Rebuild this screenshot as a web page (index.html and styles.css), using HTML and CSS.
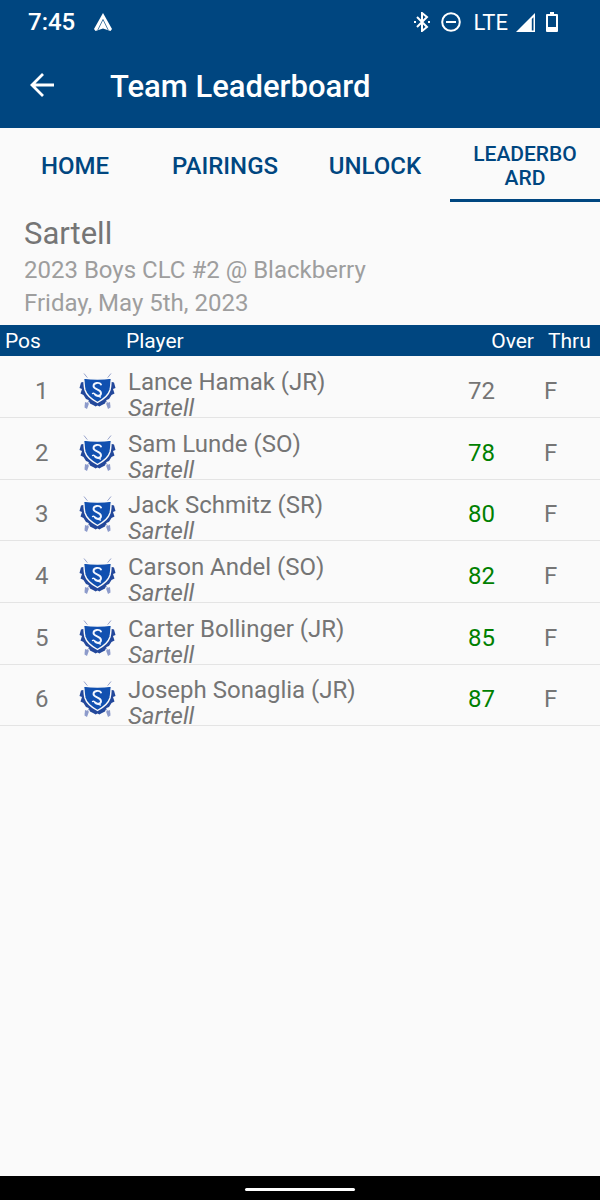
FILE: index.html
```html
<!DOCTYPE html>
<html lang="en">
<head>
<meta charset="utf-8">
<meta name="viewport" content="width=device-width, initial-scale=1">
<title>Team Leaderboard</title>
<link rel="stylesheet" href="styles.css">
</head>
<body>
<svg class="sprite" aria-hidden="true">
  <symbol id="crest" viewBox="0 0 38 38">
    <path fill="none" stroke="#98a3cc" stroke-width="1" d="M5 1.500 31 34M32 1.500 6 34"/>
    <path fill="#8d9bcb" d="m6 30 4 1.500-2 5.500-2.500-1.500zM31 30l-4 1.500 2 5.500 2.500-1.500z"/>
    <path fill="#23489b" d="M4 10 2 10.500.5 16l2.500 1-1.500 4.500 3 1.500 2.500 4 2.500 1 1.500 3.500 4 2 1.500 1 2-1 2 1 1.500-1 4-2 1.500-3.500 2.500-1 2.500-4 3-1.500-1.500-4.500 2.500-1L35 10.500 33 10z"/>
    <path fill="#1150b0" stroke="#fafafa" stroke-width="1.400" d="M4.500 6Q18.500 8 32.500 6l-.5 4c-.2 3-.2 5-1 8-1.500 5-6 9-12.500 12.500C12 27 7.500 23 6 18c-.8-3-.8-5-1-8z"/>
    <path fill="none" stroke="#f4f7ff" stroke-width="1.900" stroke-linecap="round" d="M22 12.500c-1.500-2.500-7.500-2-7.500 1.500 0 3.800 7.500 3 7.500 7.200 0 2.800-4 3.300-6 1.300"/>
    <path fill="none" stroke="#f4f7ff" stroke-width="1.300" stroke-linecap="round" d="M13.500 21.500c2-1.500 3 3 8 3.500"/>
  </symbol>
</svg>
<div class="screen">
  <header class="top">
    <div class="status">
      <span class="clock">7:45</span>
      <svg class="auto" viewBox="0 0 18 18" aria-hidden="true"><path fill="#fff" d="M9 0 0 16l1.500 2L9 15.500l7.500 2.500 1.500-2z"/><path fill="none" stroke="#004680" stroke-width=".7" d="M3.800 17 9 6.500l5.200 10.500"/></svg>
      <div class="indicators">
        <svg class="bluetooth" viewBox="0 0 18 20" fill="none" stroke="#fff" stroke-width="2" aria-hidden="true"><path d="m4 5 10 10-5 4V1l5 4L4 15"/><path d="M1 10h2M15 10h2"/></svg>
        <svg class="dnd" viewBox="0 0 20 20" fill="none" stroke="#fff" stroke-width="2" aria-hidden="true"><circle cx="10" cy="10" r="8.800"/><path d="M5 10h10"/></svg>
        <span class="network">LTE</span>
        <svg class="signal" viewBox="0 0 19 19" aria-hidden="true"><path fill="#fff" d="M0 19 19 0v19z"/><path fill="#004680" d="M15.800 6 17.500 4.300v13.200h-1.700z"/></svg>
        <svg class="battery" viewBox="0 0 12 20" aria-hidden="true"><path fill="#fff" fill-rule="evenodd" d="M4 0h4v2h3q1 0 1 1v16q0 1-1 1H1q-1 0-1-1V3q0-1 1-1h3zM2 4v11h8V4z"/></svg>
      </div>
    </div>
    <div class="appbar">
      <button class="back" type="button" aria-label="Back"><svg viewBox="0 0 24 24" fill="none" stroke="#fff" stroke-width="2.800" aria-hidden="true"><path d="M24 12H2M13 1 2 12l11 11"/></svg></button>
      <h1 class="title">Team Leaderboard</h1>
    </div>
  </header>
  <nav class="tabs">
    <a class="tab" href="#home">HOME</a>
    <a class="tab" href="#pairings">PAIRINGS</a>
    <a class="tab" href="#unlock">UNLOCK</a>
    <a class="tab tab-active" href="#leaderboard" aria-current="page">LEADERBOARD</a>
  </nav>
  <main class="content">
    <section class="event">
      <h2 class="team">Sartell</h2>
      <p class="detail">2023 Boys CLC #2 @ Blackberry</p>
      <p class="detail">Friday, May 5th, 2023</p>
    </section>
    <table class="board">
      <thead>
        <tr><th class="pos">Pos</th><th class="player">Player</th><th class="over">Over</th><th class="thru">Thru</th></tr>
      </thead>
      <tbody>
        <tr><td class="pos">1</td><td class="player"><div class="golfer"><svg class="crest"><use href="#crest"/></svg><div class="names"><span>Lance Hamak (JR)</span><em>Sartell</em></div></div></td><td class="over">72</td><td class="thru">F</td></tr>
        <tr><td class="pos">2</td><td class="player"><div class="golfer"><svg class="crest"><use href="#crest"/></svg><div class="names"><span>Sam Lunde (SO)</span><em>Sartell</em></div></div></td><td class="over above">78</td><td class="thru">F</td></tr>
        <tr><td class="pos">3</td><td class="player"><div class="golfer"><svg class="crest"><use href="#crest"/></svg><div class="names"><span>Jack Schmitz (SR)</span><em>Sartell</em></div></div></td><td class="over above">80</td><td class="thru">F</td></tr>
        <tr><td class="pos">4</td><td class="player"><div class="golfer"><svg class="crest"><use href="#crest"/></svg><div class="names"><span>Carson Andel (SO)</span><em>Sartell</em></div></div></td><td class="over above">82</td><td class="thru">F</td></tr>
        <tr><td class="pos">5</td><td class="player"><div class="golfer"><svg class="crest"><use href="#crest"/></svg><div class="names"><span>Carter Bollinger (JR)</span><em>Sartell</em></div></div></td><td class="over above">85</td><td class="thru">F</td></tr>
        <tr><td class="pos">6</td><td class="player"><div class="golfer"><svg class="crest"><use href="#crest"/></svg><div class="names"><span>Joseph Sonaglia (JR)</span><em>Sartell</em></div></div></td><td class="over above">87</td><td class="thru">F</td></tr>
      </tbody>
    </table>
  </main>
  <footer class="navbar"><div class="handle"></div></footer>
</div>
</body>
</html>
```
FILE: styles.css
```css
* { box-sizing: border-box; }
body { margin: 0; background: #fafafa; color: #757575; font-family: Roboto, sans-serif; font-size: 24px; }
.sprite { position: absolute; width: 0; height: 0; }
.screen { display: flex; flex-direction: column; min-height: 100vh; }

.top { background: #004680; color: #fff; }
.status { display: flex; align-items: center; height: 44px; padding: 0 42px 0 28px; }
.clock { font-size: 24px; font-weight: 500; }
.auto { width: 18px; height: 18px; margin-left: 19px; }
.indicators { display: flex; align-items: center; margin-left: auto; }
.bluetooth { width: 18px; height: 20px; }
.dnd { width: 20px; height: 20px; margin-left: 10px; }
.network { margin-left: 12px; font-size: 22px; }
.signal { width: 19px; height: 19px; margin-left: 8px; }
.battery { width: 12px; height: 20px; margin-left: 11px; }
.appbar { display: flex; align-items: center; height: 84px; padding: 2px 28px 0; }
.back { display: flex; width: 28px; height: 28px; padding: 0 2px; border: 0; background: none; }
.back svg { width: 24px; height: 24px; }
.title { margin: 0 0 0 54px; font-size: 31px; font-weight: 500; line-height: 36px; }

.tabs { display: grid; grid-template-columns: repeat(4, 1fr); height: 74px; }
.tab { display: flex; align-items: center; justify-content: center; padding: 2px 20px 0; color: #004680; font-weight: 500; text-align: center; text-decoration: none; }
.tab-active { padding-top: 4px; border-bottom: 3px solid #004680; font-size: 21px; line-height: 24px; word-break: break-all; }

.content { flex: 1; }
.event { padding: 11px 24px 5px; }
.team { margin: 0; font-size: 31px; font-weight: 400; line-height: 41px; }
.detail { margin: 0; color: #9e9e9e; font-size: 24px; line-height: 33px; }

.board { width: 100%; border-collapse: separate; border-spacing: 0; table-layout: fixed; }
.board th { height: 31px; padding: 0; background: #004680; color: #fff; font-size: 21px; font-weight: 400; line-height: 30px; text-align: left; }
.board td { height: 62px; padding: 8px 0 0; border-bottom: 1px solid #e4e4e4; line-height: 28px; }
.board tr:nth-child(3n) td { height: 61px; }
.board .pos { width: 79px; }
.board th.pos { padding-left: 5px; }
.board td.pos { padding-left: 35px; }
.board th.player { padding-left: 47px; }
.board .over { width: 85px; text-align: right; }
.board th.over { padding-right: 4px; }
.board td.over { padding-right: 43px; }
.board .above { color: #008000; }
.board .thru { width: 62px; }
.board th.thru { padding-left: 10px; }
.board td.thru { padding-left: 6px; }
.board td.player { padding-top: 0; }
.golfer { display: flex; align-items: flex-start; padding-top: 12px; }
.crest { flex: none; width: 38px; height: 38px; margin-top: 3px; }
.names { display: flex; flex-direction: column; height: 48px; margin-left: 11px; line-height: 26px; }

.navbar { display: flex; align-items: center; justify-content: center; height: 24px; padding-top: 2px; background: #000; }
.handle { width: 110px; height: 3px; border-radius: 2px; background: #fff; }
```
